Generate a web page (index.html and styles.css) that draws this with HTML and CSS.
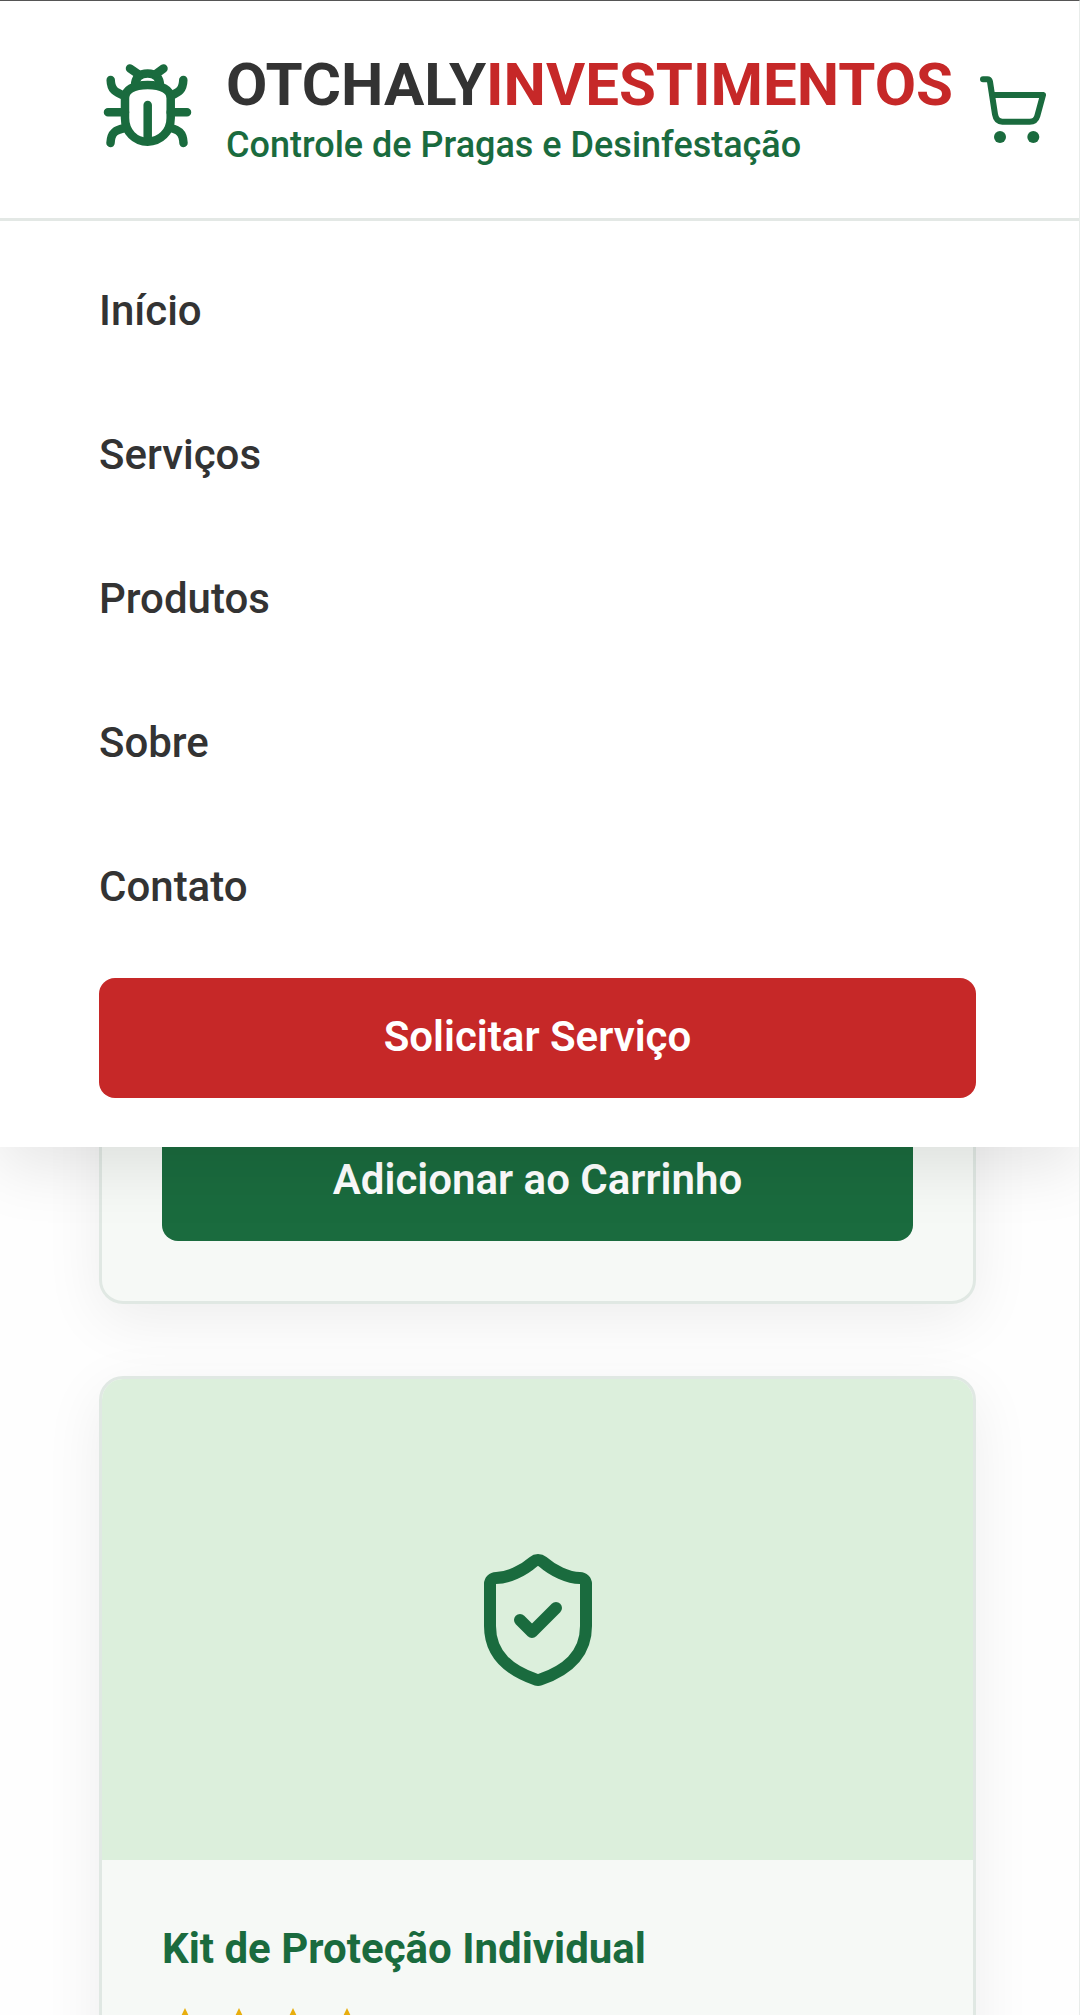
FILE: index.html
```html
<!DOCTYPE html>
<html lang="pt">
<head>
    <meta charset="UTF-8">
    <meta name="viewport" content="width=device-width, initial-scale=1.0">
    <title>Otchaly Investimentos</title>
    <link rel="stylesheet" href="styles.css">
</head>
<body>
    <div class="page">
        <header class="header">
            <svg class="logo-icon" viewBox="0 0 100 100" fill="none" stroke="#1a6b3e" stroke-width="8.5" stroke-linecap="round" stroke-linejoin="round">
                <path d="M25 38C25 30 33 25 47.7 25C62 25 70.7 30 70.7 38V58C70.7 72 60 81.7 47.7 81.7C35 81.7 25 72 25 58Z"/>
                <path d="M35 26C35 17 40 13.5 47.7 13.5C55 13.5 60 17 60 26"/>
                <path d="M30 8.5L38 14M63.5 8.5L56 14"/>
                <path d="M10.7 20C11 30 15 32 25 36M83.3 20C83 30 79 32 70.7 36"/>
                <path d="M8 52.3H25M70.7 52.3H87H87"/>
                <path d="M10.5 83C11 72 16 70 25 68M83.5 83C83 72 78 70 70.7 68"/>
                <path d="M47.7 45V77"/>
            </svg>
            <div class="brand">
                <div class="brand-name">OTCHALY<span>INVESTIMENTOS</span></div>
                <div class="brand-sub">Controle de Pragas e Desinfestação</div>
            </div>
            <svg class="cart-icon" viewBox="0 0 80 85" fill="none" stroke="#1a6b3e" stroke-width="6" stroke-linecap="round" stroke-linejoin="round">
                <path d="M9 13.3H13.3Q15.5 13.3 16 15.7L21 48.3Q22.3 55.7 28.3 55.7H55.7Q61.7 55.7 63.3 50L69 29H20"/>
                <circle cx="26" cy="71" r="6" fill="#1a6b3e" stroke="none"/>
                <circle cx="59.3" cy="71" r="6" fill="#1a6b3e" stroke="none"/>
            </svg>
        </header>

        <nav class="menu">
            <a href="#" class="menu-link">Início</a>
            <a href="#" class="menu-link">Serviços</a>
            <a href="#" class="menu-link">Produtos</a>
            <a href="#" class="menu-link">Sobre</a>
            <a href="#" class="menu-link">Contato</a>
            <button class="btn btn-red">Solicitar Serviço</button>
        </nav>

        <main class="products">
            <div class="card">
                <div class="card-img"></div>
                <div class="card-body">
                    <button class="btn btn-green">Adicionar ao Carrinho</button>
                </div>
            </div>
            <div class="card">
                <div class="card-img">
                    <svg class="shield-icon" viewBox="0 0 24 24" fill="none" stroke="#1a6b3e" stroke-width="2" stroke-linecap="round" stroke-linejoin="round">
                        <path d="M20 13c0 5-3.5 7.5-7.66 8.95a1 1 0 0 1-.67-.01C7.5 20.5 4 18 4 13V6a1 1 0 0 1 1-1c2 0 4.5-1.2 6.24-2.72a1.17 1.17 0 0 1 1.52 0C14.51 3.81 17 5 19 5a1 1 0 0 1 1 1z"/>
                        <path d="m9 12 2 2 4-4"/>
                    </svg>
                </div>
                <div class="card-body">
                    <h3 class="card-title">Kit de Proteção Individual</h3>
                    <div class="stars">
                        <svg class="star" viewBox="0 0 24 24"><path d="M12 1l3.4 7.2 7.6 1-5.6 5.4 1.4 7.8-6.8-3.8-6.8 3.8 1.4-7.8L1 9.2l7.6-1z"/></svg>
                        <svg class="star" viewBox="0 0 24 24"><path d="M12 1l3.4 7.2 7.6 1-5.6 5.4 1.4 7.8-6.8-3.8-6.8 3.8 1.4-7.8L1 9.2l7.6-1z"/></svg>
                        <svg class="star" viewBox="0 0 24 24"><path d="M12 1l3.4 7.2 7.6 1-5.6 5.4 1.4 7.8-6.8-3.8-6.8 3.8 1.4-7.8L1 9.2l7.6-1z"/></svg>
                        <svg class="star" viewBox="0 0 24 24"><path d="M12 1l3.4 7.2 7.6 1-5.6 5.4 1.4 7.8-6.8-3.8-6.8 3.8 1.4-7.8L1 9.2l7.6-1z"/></svg>
                    </div>
                </div>
            </div>
        </main>
    </div>
</body>
</html>
```

FILE: styles.css
```css
html, body {
    margin: 0;
    height: 100%;
    overflow: hidden;
}
body {
    font-family: Roboto, "Liberation Sans", sans-serif;
    background-color: #fefefe;
}
.page {
    position: relative;
    height: 2015px;
    overflow: hidden;
    box-sizing: border-box;
    border-top: 1px solid #555;
    border-right: 1px solid #e8ecea;
}
.header {
    position: relative;
    z-index: 6;
    display: flex;
    align-items: center;
    height: 217px;
    padding-left: 100px;
    background-color: #fff;
    border-bottom: 3px solid #e3e8e5;
}
.logo-icon {
    width: 100px;
    height: 100px;
    flex-shrink: 0;
    margin-right: 26px;
}
.brand {
    margin-top: 5px;
}
.brand-name {
    font-size: 60px;
    font-weight: 700;
    line-height: 66px;
    color: #333;
    white-space: nowrap;
}
.brand-name span {
    color: #c62828;
}
.brand-sub {
    font-size: 36px;
    font-weight: 500;
    line-height: 54px;
    color: #1a6b3e;
    white-space: nowrap;
}
.cart-icon {
    width: 80px;
    height: 85px;
    flex-shrink: 0;
    margin-left: 21px;
    margin-top: -2px;
}
.menu {
    position: absolute;
    top: 220px;
    left: 0;
    right: 0;
    z-index: 5;
    display: flex;
    flex-direction: column;
    padding: 17px 103px 49px 99px;
    background-color: #fff;
    box-shadow: 0 20px 60px rgba(0, 0, 0, 0.1);
}
.menu-link {
    display: flex;
    align-items: center;
    height: 144px;
    font-size: 42px;
    font-weight: 500;
    color: #333;
    text-decoration: none;
}
.btn {
    display: block;
    width: 100%;
    height: 120px;
    padding: 0 0 4px;
    border: none;
    border-radius: 16px;
    color: #fff;
    font-family: inherit;
    font-size: 42px;
    font-weight: 600;
    cursor: pointer;
}
.btn-red {
    margin-top: 20px;
    background-color: #c62828;
}
.btn-green {
    background-color: #1a6b3e;
}
.products {
    display: flex;
    flex-direction: column;
    gap: 72px;
    padding: 356px 103px 0 99px;
}
.card {
    flex-shrink: 0;
    overflow: hidden;
    background-color: #f6f9f6;
    border: 3px solid #e0e8e3;
    border-radius: 24px;
    box-shadow: 0 16px 60px rgba(0, 0, 0, 0.07);
}
.card-img {
    display: flex;
    align-items: center;
    justify-content: center;
    height: 481px;
    background-color: #dcefdc;
}
.shield-icon {
    width: 144px;
    height: 144px;
}
.card-body {
    padding: 60px;
}
.card-title {
    margin: 0 0 28px;
    font-size: 42px;
    font-weight: 700;
    line-height: 58px;
    color: #1a6b3e;
}
.stars {
    display: flex;
    gap: 8px;
}
.star {
    width: 46px;
    height: 46px;
    flex-shrink: 0;
    fill: #e8ae0e;
}
```
